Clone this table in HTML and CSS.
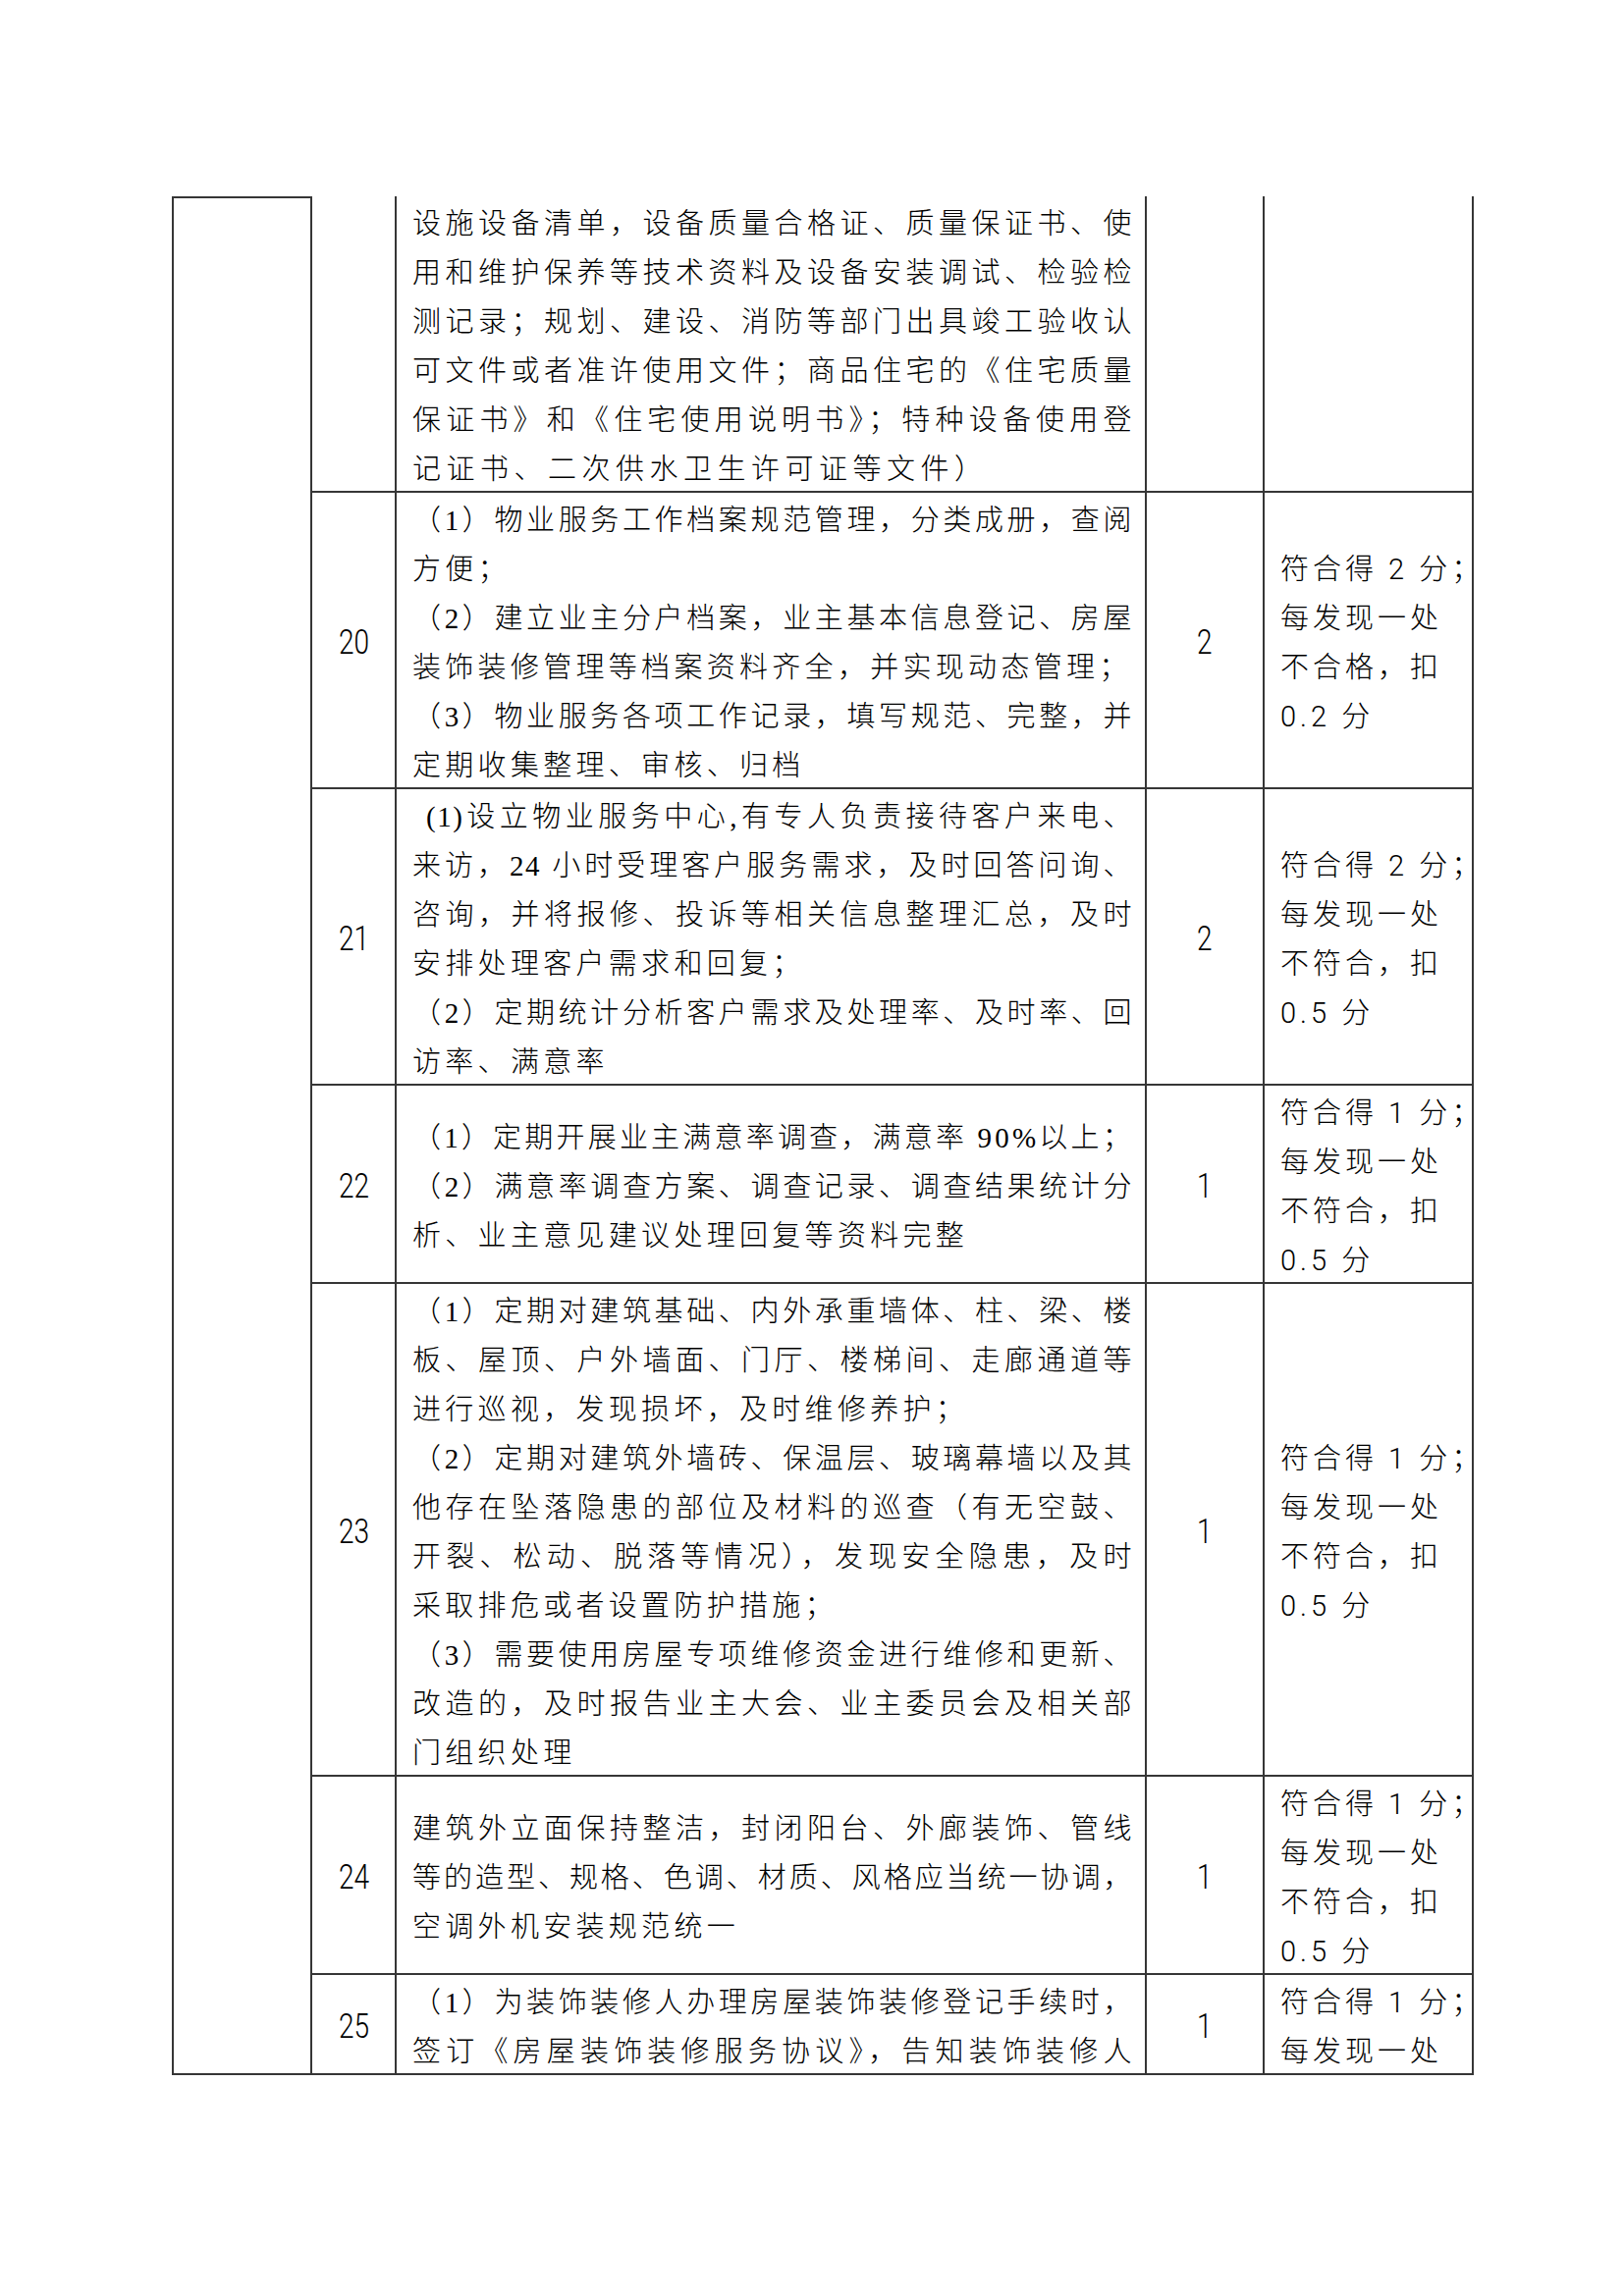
FILE: index.html
```html
<!DOCTYPE html>
<html lang="zh-CN">
<head>
<meta charset="utf-8">
<title>物业服务考核表</title>
<link rel="stylesheet" href="styles.css">
</head>
<body>
<div class="page">
  <div class="grid">
    <div class="c outer"></div>

    <!-- row 19 (continued) -->
    <div class="c num"></div>
    <div class="c txt"><div class="in">
      <span class="j">设施设备清单，设备质量合格证、质量保证书、使</span>
      <span class="j">用和维护保养等技术资料及设备安装调试、检验检</span>
      <span class="j">测记录；规划、建设、消防等部门出具竣工验收认</span>
      <span class="j">可文件或者准许使用文件；商品住宅的《住宅质量</span>
      <span class="j">保证书》和《住宅使用说明书》；特种设备使用登</span>
      <span class="l wide">记证书、二次供水卫生许可证等文件）</span>
    </div></div>
    <div class="c sc"></div>
    <div class="c rule"></div>

    <!-- row 20 -->
    <div class="c num"><div class="in"><span class="dg">20</span></div></div>
    <div class="c txt"><div class="in">
      <span class="j">（1）物业服务工作档案规范管理，分类成册，查阅</span>
      <span class="l">方便；</span>
      <span class="j">（2）建立业主分户档案，业主基本信息登记、房屋</span>
      <span class="l">装饰装修管理等档案资料齐全，并实现动态管理；</span>
      <span class="j">（3）物业服务各项工作记录，填写规范、完整，并</span>
      <span class="l">定期收集整理、审核、归档</span>
    </div></div>
    <div class="c sc"><div class="in"><span class="dg">2</span></div></div>
    <div class="c rule"><div class="in">
      <span class="l">符合得 2 分；</span>
      <span class="l">每发现一处</span>
      <span class="l">不合格，扣</span>
      <span class="l">0.2 分</span>
    </div></div>

    <!-- row 21 -->
    <div class="c num"><div class="in"><span class="dg">21</span></div></div>
    <div class="c txt"><div class="in">
      <span class="j ind">(1)设立物业服务中心,有专人负责接待客户来电、</span>
      <span class="j">来访，24 小时受理客户服务需求，及时回答问询、</span>
      <span class="j">咨询，并将报修、投诉等相关信息整理汇总，及时</span>
      <span class="l">安排处理客户需求和回复；</span>
      <span class="j">（2）定期统计分析客户需求及处理率、及时率、回</span>
      <span class="l">访率、满意率</span>
    </div></div>
    <div class="c sc"><div class="in"><span class="dg">2</span></div></div>
    <div class="c rule"><div class="in">
      <span class="l">符合得 2 分；</span>
      <span class="l">每发现一处</span>
      <span class="l">不符合，扣</span>
      <span class="l">0.5 分</span>
    </div></div>

    <!-- row 22 -->
    <div class="c num"><div class="in"><span class="dg">22</span></div></div>
    <div class="c txt"><div class="in">
      <span class="l tight">（1）定期开展业主满意率调查，满意率 90%以上；</span>
      <span class="j">（2）满意率调查方案、调查记录、调查结果统计分</span>
      <span class="l">析、业主意见建议处理回复等资料完整</span>
    </div></div>
    <div class="c sc"><div class="in"><span class="dg">1</span></div></div>
    <div class="c rule"><div class="in">
      <span class="l">符合得 1 分；</span>
      <span class="l">每发现一处</span>
      <span class="l">不符合，扣</span>
      <span class="l">0.5 分</span>
    </div></div>

    <!-- row 23 -->
    <div class="c num"><div class="in"><span class="dg">23</span></div></div>
    <div class="c txt"><div class="in">
      <span class="j">（1）定期对建筑基础、内外承重墙体、柱、梁、楼</span>
      <span class="j">板、屋顶、户外墙面、门厅、楼梯间、走廊通道等</span>
      <span class="l">进行巡视，发现损坏，及时维修养护；</span>
      <span class="j">（2）定期对建筑外墙砖、保温层、玻璃幕墙以及其</span>
      <span class="j">他存在坠落隐患的部位及材料的巡查（有无空鼓、</span>
      <span class="j">开裂、松动、脱落等情况），发现安全隐患，及时</span>
      <span class="l">采取排危或者设置防护措施；</span>
      <span class="j">（3）需要使用房屋专项维修资金进行维修和更新、</span>
      <span class="j">改造的，及时报告业主大会、业主委员会及相关部</span>
      <span class="l">门组织处理</span>
    </div></div>
    <div class="c sc"><div class="in"><span class="dg">1</span></div></div>
    <div class="c rule"><div class="in">
      <span class="l">符合得 1 分；</span>
      <span class="l">每发现一处</span>
      <span class="l">不符合，扣</span>
      <span class="l">0.5 分</span>
    </div></div>

    <!-- row 24 -->
    <div class="c num"><div class="in"><span class="dg">24</span></div></div>
    <div class="c txt"><div class="in">
      <span class="j">建筑外立面保持整洁，封闭阳台、外廊装饰、管线</span>
      <span class="j">等的造型、规格、色调、材质、风格应当统一协调，</span>
      <span class="l">空调外机安装规范统一</span>
    </div></div>
    <div class="c sc"><div class="in"><span class="dg">1</span></div></div>
    <div class="c rule"><div class="in">
      <span class="l">符合得 1 分；</span>
      <span class="l">每发现一处</span>
      <span class="l">不符合，扣</span>
      <span class="l">0.5 分</span>
    </div></div>

    <!-- row 25 (continues on next page) -->
    <div class="c num"><div class="in"><span class="dg">25</span></div></div>
    <div class="c txt"><div class="in">
      <span class="j">（1）为装饰装修人办理房屋装饰装修登记手续时，</span>
      <span class="j">签订《房屋装饰装修服务协议》，告知装饰装修人</span>
    </div></div>
    <div class="c sc"><div class="in"><span class="dg">1</span></div></div>
    <div class="c rule"><div class="in">
      <span class="l">符合得 1 分；</span>
      <span class="l">每发现一处</span>
    </div></div>
  </div>
</div>
</body>
</html>
```

FILE: styles.css
```css
html, body {
  margin: 0;
  padding: 0;
  background: #ffffff;
}

.page {
  width: 1654px;
  height: 2339px;
  box-sizing: border-box;
  padding: 200px 0 0 175px;
  color: #000000;
  overflow: hidden;
}

.grid {
  display: grid;
  grid-template-columns: 143px 86px 764px 120px 213px;
  width: 1326px;
}

.c {
  box-sizing: border-box;
  border-right: 2px solid #363636;
  border-bottom: 2px solid #363636;
  display: flex;
  flex-direction: column;
  justify-content: center;
  min-width: 0;
}

.outer {
  grid-column: 1;
  grid-row: 1 / span 7;
  border-left: 2px solid #363636;
  border-top: 2px solid #363636;
}

.in {
  padding-top: 3px;
  margin-bottom: -3px;
}

.txt {
  padding: 0 12px 0 16px;
  font-family: "Liberation Serif", "Noto Sans CJK SC", serif;
  font-size: 29px;
  font-weight: 300;
  letter-spacing: 4.3px;
  line-height: 50px;
}

.j {
  display: block;
  text-align: justify;
  text-align-last: justify;
  letter-spacing: 1.5px;
  white-space: nowrap;
}

.l {
  display: block;
  white-space: nowrap;
}

.wide {
  letter-spacing: 5.5px;
}

.ind {
  text-indent: 14px;
}

.tight {
  letter-spacing: 3.2px;
}

.num,
.sc {
  align-items: center;
  font-family: "Roboto", "Liberation Sans", sans-serif;
  font-weight: 300;
  font-size: 35px;
  line-height: 50px;
}

.dg {
  display: inline-block;
  transform: scaleX(0.8);
}

.rule {
  padding-left: 16px;
  font-family: "Roboto", "Noto Sans CJK SC", sans-serif;
  font-size: 29px;
  font-weight: 300;
  letter-spacing: 4px;
  line-height: 50px;
  white-space: nowrap;
}
```
